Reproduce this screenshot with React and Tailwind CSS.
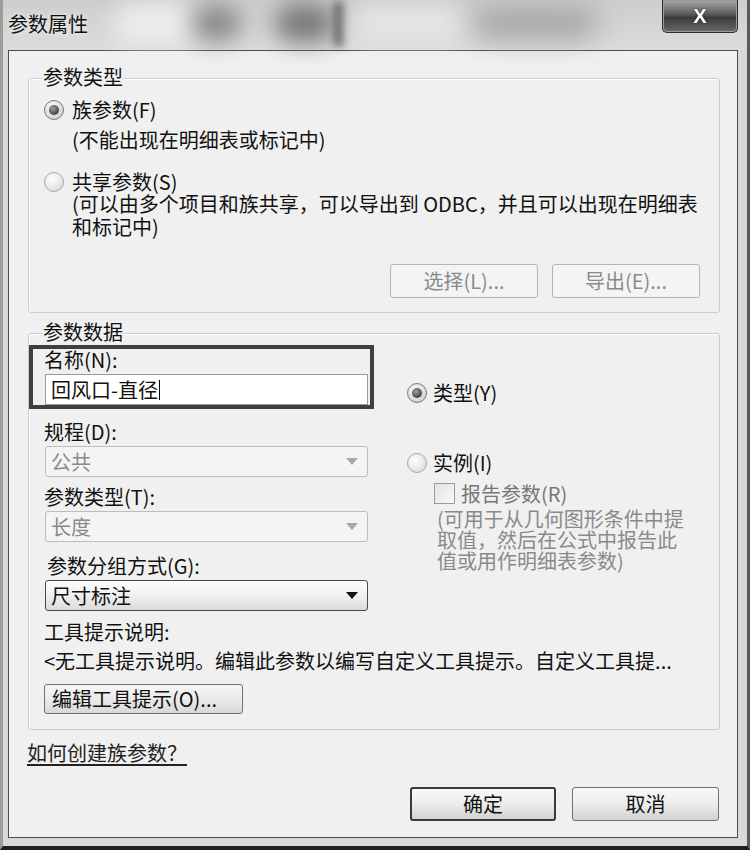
import React from "react";

const Radio = ({ checked }) => (
  <span
    className={`inline-flex h-[20px] w-[20px] shrink-0 items-center justify-center rounded-full border ${
      checked
        ? "border-[#7a7a7a] bg-[radial-gradient(circle_at_40%_35%,#ffffff,#c2c2c2)]"
        : "border-[#a8a8a8] bg-[radial-gradient(circle_at_40%_35%,#ffffff,#d4d4d4)]"
    }`}
  >
    {checked && (
      <span className="h-[10px] w-[10px] rounded-full bg-[radial-gradient(circle_at_40%_35%,#a0a0a0,#1c1c1c)]" />
    )}
  </span>
);

const Arrow = ({ dark }) => (
  <svg width="12" height="7" viewBox="0 0 12 7" className="mr-[9px]">
    <polygon points="0,0 12,0 6,7" fill={dark ? "#111" : "#a8a8a8"} />
  </svg>
);

const GroupBox = ({ title, className, children }) => (
  <div
    className={`relative ml-[19px] w-[692px] rounded-[3px] border border-[#cdcdcd] shadow-[inset_1px_1px_0_#ffffff] ${className}`}
  >
    <span className="absolute -top-[13px] left-[13px] bg-[#f0f0f0] px-[1px] leading-[21px]">
      {title}
    </span>
    {children}
  </div>
);

const App = () => {
  return (
    <div className="relative flex h-[850px] w-[750px] flex-col overflow-hidden border-b-[4px] border-l-[3px] border-r-[3px] border-b-[#1e1e1e] border-l-[#9c9c9c] border-r-[#5a5a5a] bg-[#d8d8d8] font-['Noto_Sans_CJK_SC',sans-serif] text-[20px] text-[#111]">
      {/* title bar */}
      <div className="relative h-[50px] shrink-0 bg-[linear-gradient(#cdcdcd,#dcdcdc)]">
        <span className="absolute left-[110px] top-[4px] h-[40px] w-[90px] rounded-full bg-[#eeeeee] blur-[12px]" />
        <span className="absolute left-[188px] top-[6px] h-[34px] w-[50px] rounded-full bg-[#858585] blur-[12px]" />
        <span className="absolute left-[272px] top-[4px] h-[38px] w-[60px] rounded-full bg-[#767676] blur-[12px]" />
        <span className="absolute left-[331px] top-[2px] h-[44px] w-[9px] bg-[#606060] blur-[4px]" />
        <span className="absolute left-[350px] top-[6px] h-[36px] w-[110px] rounded-full bg-[#e6e6e6] blur-[12px]" />
        <span className="absolute left-[470px] top-[8px] h-[30px] w-[125px] rounded-full bg-[#a2a2a2] blur-[14px]" />
        <span className="absolute left-[5px] top-[12px] leading-[24px] text-[#111] [text-shadow:0_0_6px_#ffffff]">
          参数属性
        </span>
        <div className="absolute right-[9px] top-0 flex h-[33px] w-[76px] items-center justify-center rounded-b-[5px] border border-t-0 border-[#2e2e2e] bg-[linear-gradient(#a8a8a8,#5a5a5a_45%,#3a3a3a_55%,#6a6a6a)] shadow-[inset_0_0_0_1px_#9a9a9a]">
          <span className="font-['Liberation_Sans',sans-serif] text-[20px] font-bold leading-none text-white [text-shadow:0_0_2px_#000]">
            X
          </span>
        </div>
      </div>

      {/* client area */}
      <div className="ml-[5px] mr-[9px] h-[788px] shrink-0 border border-[#4d4d4d] bg-[#f0f0f0]">
        <GroupBox title="参数类型" className="mt-[27px] h-[235px]">
          <div className="pl-[15px] pt-[20px]">
            <div className="flex h-[21px] items-center gap-[8px]">
              <Radio checked />
              <span className="leading-[21px]">族参数(F)</span>
            </div>
            <div className="mt-[9px] pl-[28px] leading-[21px]">
              (不能出现在明细表或标记中)
            </div>
            <div className="mt-[21px] flex h-[21px] items-center gap-[8px]">
              <Radio />
              <span className="leading-[21px]">共享参数(S)</span>
            </div>
            <div className="whitespace-nowrap pl-[28px] leading-[23px]">
              (可以由多个项目和族共享，可以导出到 ODBC，并且可以出现在明细表
              <br />
              和标记中)
            </div>
            <div className="mt-[26px] flex justify-end gap-[14px] pr-[19px]">
              <div className="flex h-[34px] w-[148px] items-center justify-center rounded-[3px] border border-[#b4b4b4] bg-[#f4f4f4] text-[#8a8a8a]">
                选择(L)...
              </div>
              <div className="flex h-[34px] w-[148px] items-center justify-center rounded-[3px] border border-[#b4b4b4] bg-[#f4f4f4] text-[#8a8a8a]">
                导出(E)...
              </div>
            </div>
          </div>
        </GroupBox>

        <GroupBox title="参数数据" className="mt-[20px] h-[397px]">
          <div className="pt-[11px]">
            <div className="flex">
              <div className="w-[345px]">
                <div className="h-[64px] w-[345px] border-[4px] border-[#3f3f3f] pl-[11px] pr-[2px]">
                  <div className="leading-[21px]">名称(N):</div>
                  <div className="ml-[1px] mt-[4px] flex h-[31px] items-center border border-[#9a9a9a] bg-white pl-[5px]">
                    回风口-直径
                    <span className="ml-[1px] h-[20px] w-[1px] bg-black" />
                  </div>
                </div>
                <div className="pl-[15px]">
                  <div className="mt-[12px] leading-[21px]">规程(D):</div>
                  <div className="ml-[1px] mt-[4px] flex h-[31px] w-[323px] items-center justify-between rounded-[3px] border border-[#bcbcbc] bg-[#f4f4f4] pl-[5px] text-[#8a8a8a]">
                    公共
                    <Arrow />
                  </div>
                  <div className="mt-[9px] leading-[21px]">参数类型(T):</div>
                  <div className="ml-[1px] mt-[4px] flex h-[31px] w-[323px] items-center justify-between rounded-[3px] border border-[#bcbcbc] bg-[#f4f4f4] pl-[5px] text-[#8a8a8a]">
                    长度
                    <Arrow />
                  </div>
                  <div className="mt-[13px] pl-[3px] leading-[21px]">
                    参数分组方式(G):
                  </div>
                  <div className="ml-[1px] mt-[4px] flex h-[31px] w-[323px] items-center justify-between rounded-[3px] border border-[#4a4a4a] bg-[linear-gradient(#fdfdfd,#f0f0f0_50%,#dadada)] pl-[5px]">
                    尺寸标注
                    <Arrow dark />
                  </div>
                </div>
              </div>

              <div className="ml-[33px] mt-[37px]">
                <div className="flex h-[21px] items-center gap-[6px]">
                  <Radio checked />
                  <span className="leading-[21px]">类型(Y)</span>
                </div>
                <div className="mt-[49px] flex h-[21px] items-center gap-[6px]">
                  <Radio />
                  <span className="leading-[21px]">实例(I)</span>
                </div>
                <div className="ml-[27px] mt-[10px] flex items-center gap-[6px]">
                  <span className="h-[21px] w-[21px] border border-[#9a9a9a] bg-[linear-gradient(135deg,#e2e2e2,#fafafa)]" />
                  <span className="leading-[21px] text-[#777]">报告参数(R)</span>
                </div>
                <div className="ml-[30px] mt-[4px] whitespace-nowrap leading-[21px] text-[#8a8a8a]">
                  (可用于从几何图形条件中提
                  <br />
                  取值，然后在公式中报告此
                  <br />
                  值或用作明细表参数)
                </div>
              </div>
            </div>

            <div className="pl-[15px]">
              <div className="mt-[10px] leading-[21px]">工具提示说明:</div>
              <div className="mt-[8px] whitespace-nowrap leading-[21px]">
                &lt;无工具提示说明。编辑此参数以编写自定义工具提示。自定义工具提...
              </div>
              <div className="mt-[13px] flex h-[30px] w-[199px] items-center rounded-[3px] border border-[#6f6f6f] bg-[linear-gradient(#f6f6f6,#ebebeb_50%,#d8d8d8)] pl-[7px]">
                编辑工具提示(O)...
              </div>
            </div>
          </div>
        </GroupBox>

        <div className="ml-[18px] mt-[12px] leading-[21px] text-[#222] underline underline-offset-[3px]">
          如何创建族参数？
        </div>

        <div className="mt-[24px] flex justify-end gap-[16px] pr-[18px]">
          <div className="flex h-[34px] w-[146px] items-center justify-center rounded-[3px] border-[2px] border-[#3a3a3a] bg-[linear-gradient(#f8f8f8,#ececec_50%,#d2d2d2)]">
            确定
          </div>
          <div className="flex h-[34px] w-[147px] items-center justify-center rounded-[3px] border border-[#6f6f6f] bg-[linear-gradient(#f8f8f8,#ececec_50%,#d2d2d2)]">
            取消
          </div>
        </div>
      </div>
    </div>
  );
};

export default App;
